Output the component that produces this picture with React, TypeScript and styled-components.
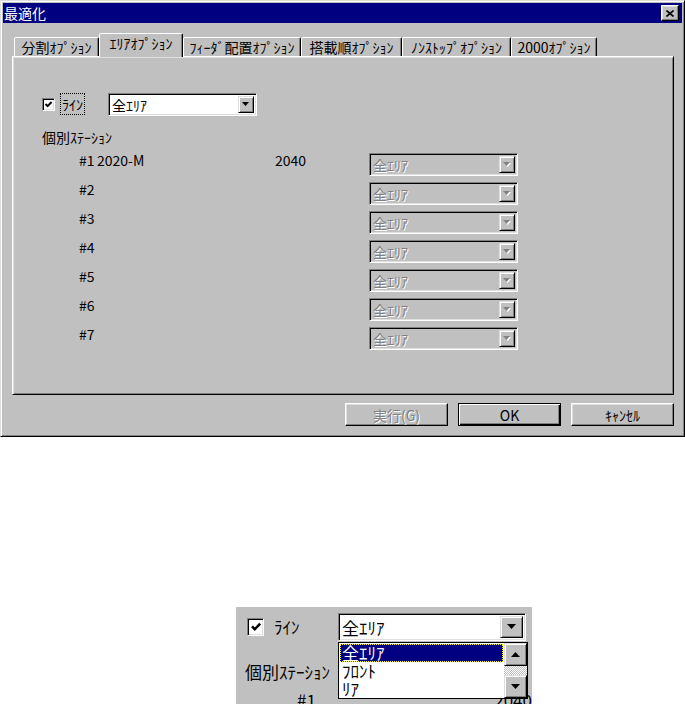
import styled, {createGlobalStyle} from "styled-components";

const GlobalStyle = createGlobalStyle`
  body {
    margin: 0;
    background: #fff;
    font-family: "Noto Sans CJK JP", "Noto Sans", sans-serif;
    font-size: 14px;
    color: #000;
  }
`;

const Page = styled.div`
  display: flex;
  flex-direction: column;
  width: 685px;
  height: 704px;
  overflow: hidden;
`;

const Dialog = styled.div`
  box-sizing: border-box;
  width: 685px;
  height: 437px;
  background: #c0c0c0;
  border: 1px solid;
  border-color: #dfdfdf #000 #000 #dfdfdf;
  box-shadow: inset 1px 1px #fff, inset -1px -1px #808080;
  padding: 2px;
  display: flex;
  flex-direction: column;
`;

const TitleBar = styled.div`
  height: 20px;
  background: #000080;
  color: #fff;
  display: flex;
  align-items: center;
  justify-content: space-between;
  padding: 0 3px 0 1px;
  line-height: 20px;
`;

const CloseButton = styled.div`
  box-sizing: border-box;
  width: 18px;
  height: 16px;
  background: #c0c0c0;
  border: 1px solid;
  border-color: #fff #000 #000 #fff;
  box-shadow: inset -1px -1px #808080, inset 1px 1px #dfdfdf;
  display: flex;
  align-items: center;
  justify-content: center;
`;

const Body = styled.div`
  display: flex;
  flex-direction: column;
  padding: 10px 8px 0 9px;
`;

const TabRow = styled.div`
  display: flex;
  align-items: flex-end;
  height: 23px;
  padding-left: 2px;
`;

const Tab = styled.div<{$active?: boolean; $w: number}>`
  position: relative;
  z-index: ${(p) => (p.$active ? 2 : 1)};
  box-sizing: border-box;
  width: ${(p) => p.$w}px;
  height: ${(p) => (p.$active ? 24 : 19)}px;
  margin-bottom: ${(p) => (p.$active ? -1 : 0)}px;
  background: #c0c0c0;
  border: 1px solid;
  border-bottom: 0;
  border-color: #fff #000 transparent #fff;
  border-radius: 2px 2px 0 0;
  box-shadow: inset -1px 0 #808080;
  text-align: center;
  line-height: 18px;
  white-space: nowrap;
`;

const Panel = styled.div`
  box-sizing: border-box;
  height: 339px;
  border: 1px solid;
  border-color: #fff #000 #000 #fff;
  box-shadow: inset 1px 1px #dfdfdf, inset -1px -1px #808080;
  padding: 36px 0 0 29px;
  display: flex;
  flex-direction: column;
`;

const CheckRow = styled.div<{$h: number}>`
  display: flex;
  align-items: center;
  height: ${(p) => p.$h}px;
`;

const CheckBox = styled.div<{$w: number; $h: number}>`
  box-sizing: border-box;
  width: ${(p) => p.$w}px;
  height: ${(p) => p.$h}px;
  background: #fff;
  border: 1px solid;
  border-color: #808080 #fff #fff #808080;
  box-shadow: inset 1px 1px #000, inset -1px -1px #dfdfdf;
  display: flex;
  align-items: center;
  justify-content: center;
`;

const CheckLabel = styled.span<{$w: number; $gap: number; $focus?: boolean}>`
  box-sizing: border-box;
  width: ${(p) => p.$w}px;
  margin-left: ${(p) => p.$gap}px;
  line-height: 1.1;
  white-space: nowrap;
  span {
    outline: ${(p) => (p.$focus ? "1px dotted #000" : "none")};
    padding: 0 1px;
  }
`;

const Combo = styled.div<{$w: number; $h: number; $disabled?: boolean}>`
  position: relative;
  box-sizing: border-box;
  width: ${(p) => p.$w}px;
  height: ${(p) => p.$h}px;
  background: ${(p) => (p.$disabled ? "#c0c0c0" : "#fff")};
  border: 1px solid;
  border-color: #808080 #fff #fff #808080;
  box-shadow: inset 1px 1px #000, inset -1px -1px #dfdfdf;
  padding: 2px;
  display: flex;
  align-items: stretch;
`;

const ComboText = styled.div<{$disabled?: boolean}>`
  flex: 1;
  display: flex;
  align-items: center;
  padding-left: 1px;
  white-space: nowrap;
  color: ${(p) => (p.$disabled ? "#808080" : "#000")};
  text-shadow: ${(p) => (p.$disabled ? "1px 1px 0 #fff" : "none")};
`;

const ArrowButton = styled.div<{$w: number}>`
  box-sizing: border-box;
  width: ${(p) => p.$w}px;
  background: #c0c0c0;
  border: 1px solid;
  border-color: #dfdfdf #000 #000 #dfdfdf;
  box-shadow: inset 1px 1px #fff, inset -1px -1px #808080;
  display: flex;
  align-items: center;
  justify-content: center;
`;

const SectionLabel = styled.div<{$mt: number; $lh: number}>`
  margin-top: ${(p) => p.$mt}px;
  line-height: ${(p) => p.$lh}px;
  white-space: nowrap;
`;

const StationList = styled.div`
  display: flex;
  flex-direction: column;
  margin-top: 9px;
`;

const StationRow = styled.div`
  display: grid;
  grid-template-columns: 18px 178px 94px 149px;
  height: 29px;
  padding-left: 37px;
  line-height: 14px;
  white-space: nowrap;
`;

const ButtonRow = styled.div`
  display: flex;
  justify-content: flex-end;
  gap: 10px;
  margin-top: 8px;
`;

const Button = styled.button<{$default?: boolean}>`
  box-sizing: border-box;
  width: 103px;
  height: 23px;
  padding: 0;
  font: inherit;
  font-size: 14px;
  background: #c0c0c0;
  color: #000;
  border: 1px solid;
  border-color: ${(p) => (p.$default ? "#000" : "#fff #000 #000 #fff")};
  box-shadow: ${(p) =>
    p.$default
      ? "inset 1px 1px #fff, inset -1px -1px #000, inset -2px -2px #808080"
      : "inset -1px -1px #808080, inset 1px 1px #dfdfdf"};
  &:disabled {
    color: #808080;
    text-shadow: 1px 1px 0 #fff;
  }
`;

const Zoomed = styled.div`
  position: relative;
  box-sizing: border-box;
  margin: 170px 0 0 236px;
  width: 296px;
  height: 97px;
  background: #c0c0c0;
  overflow: hidden;
  padding: 6px 0 0 11px;
  font-size: 17px;
`;

const DropList = styled.div`
  position: absolute;
  z-index: 5;
  top: calc(100% + 2px);
  left: -1px;
  box-sizing: border-box;
  width: 190px;
  height: 57px;
  background: #fff;
  border: 1px solid #000;
  display: flex;
`;

const Items = styled.div`
  flex: 1;
  padding: 1px;
  display: flex;
  flex-direction: column;
`;

const Item = styled.div<{$selected?: boolean}>`
  box-sizing: border-box;
  height: 18px;
  line-height: 16px;
  padding-left: 1px;
  white-space: nowrap;
  background: ${(p) => (p.$selected ? "#000080" : "transparent")};
  color: ${(p) => (p.$selected ? "#fff" : "#000")};
  border: 1px dotted ${(p) => (p.$selected ? "#ffff00" : "transparent")};
`;

const ScrollBar = styled.div`
  width: 23px;
  display: flex;
  flex-direction: column;
`;

const ScrollButton = styled(ArrowButton)`
  height: 23px;
`;

const ScrollTrack = styled.div`
  flex: 1;
  background-color: #fff;
  background-image: repeating-conic-gradient(#c0c0c0 0 25%, #fff 0 50%);
  background-size: 2px 2px;
`;

const ZoomRow = styled.div`
  display: flex;
  line-height: 20px;
  white-space: nowrap;
`;

const ZoomCell = styled.span<{$w: number}>`
  width: ${(p) => p.$w}px;
`;

function Arrow({up, disabled, size = 7}: {up?: boolean; disabled?: boolean; size?: number}) {
  const h = Math.ceil(size / 2);
  const points = up ? `0,${h} ${size / 2},0 ${size},${h}` : `0,0 ${size / 2},${h} ${size},0`;
  return (
    <svg width={size + 1} height={h + 1} viewBox={`0 0 ${size + 1} ${h + 1}`}>
      {disabled && <polygon points={points} fill="#fff" transform="translate(1,1)" />}
      <polygon points={points} fill={disabled ? "#808080" : "#000"} />
    </svg>
  );
}

function Check({size}: {size: number}) {
  return (
    <svg width={size} height={size} viewBox="0 0 9 9">
      <polyline points="1.5,4 3.6,6.2 7.6,2" fill="none" stroke="#000" strokeWidth="1.9" />
    </svg>
  );
}

const tabs = [
  {label: "分割ｵﾌﾟｼｮﾝ", w: 85},
  {label: "ｴﾘｱｵﾌﾟｼｮﾝ", w: 84, active: true},
  {label: "ﾌｨｰﾀﾞ配置ｵﾌﾟｼｮﾝ", w: 118},
  {label: "搭載順ｵﾌﾟｼｮﾝ", w: 101},
  {label: "ﾉﾝｽﾄｯﾌﾟｵﾌﾟｼｮﾝ", w: 109},
  {label: "2000ｵﾌﾟｼｮﾝ", w: 86},
];

const stations = [
  {no: "#1", name: "2020-M", code: "2040"},
  {no: "#2", name: "", code: ""},
  {no: "#3", name: "", code: ""},
  {no: "#4", name: "", code: ""},
  {no: "#5", name: "", code: ""},
  {no: "#6", name: "", code: ""},
  {no: "#7", name: "", code: ""},
];

export default function App() {
  return (
    <>
      <GlobalStyle />
      <Page>
        <Dialog>
          <TitleBar>
            <span>最適化</span>
            <CloseButton>
              <svg width="8" height="7" viewBox="0 0 8 7">
                <path d="M0.5 0.5 L7.5 6.5 M7.5 0.5 L0.5 6.5" stroke="#000" strokeWidth="1.6" />
              </svg>
            </CloseButton>
          </TitleBar>
          <Body>
            <TabRow>
              {tabs.map((t) => (
                <Tab key={t.label} $w={t.w} $active={t.active}>
                  {t.label}
                </Tab>
              ))}
            </TabRow>
            <Panel>
              <CheckRow $h={23}>
                <CheckBox $w={13} $h={13}>
                  <Check size={9} />
                </CheckBox>
                <CheckLabel $w={47} $gap={6} $focus>
                  <span>ﾗｲﾝ</span>
                </CheckLabel>
                <Combo $w={149} $h={23}>
                  <ComboText>全ｴﾘｱ</ComboText>
                  <ArrowButton $w={16}>
                    <Arrow />
                  </ArrowButton>
                </Combo>
              </CheckRow>
              <SectionLabel $mt={14} $lh={14}>
                個別ｽﾃｰｼｮﾝ
              </SectionLabel>
              <StationList>
                {stations.map((s) => (
                  <StationRow key={s.no}>
                    <span>{s.no}</span>
                    <span>{s.name}</span>
                    <span>{s.code}</span>
                    <Combo $w={149} $h={23} $disabled>
                      <ComboText $disabled>全ｴﾘｱ</ComboText>
                      <ArrowButton $w={16}>
                        <Arrow disabled />
                      </ArrowButton>
                    </Combo>
                  </StationRow>
                ))}
              </StationList>
            </Panel>
            <ButtonRow>
              <Button disabled>実行(G)</Button>
              <Button $default>OK</Button>
              <Button>ｷｬﾝｾﾙ</Button>
            </ButtonRow>
          </Body>
        </Dialog>

        <Zoomed>
          <CheckRow $h={28}>
            <CheckBox $w={17} $h={18}>
              <Check size={12} />
            </CheckBox>
            <CheckLabel $w={65} $gap={9}>
              <span>ﾗｲﾝ</span>
            </CheckLabel>
            <Combo $w={188} $h={28}>
              <ComboText>全ｴﾘｱ</ComboText>
              <ArrowButton $w={23}>
                <Arrow size={9} />
              </ArrowButton>
              <DropList>
                <Items>
                  <Item $selected>全ｴﾘｱ</Item>
                  <Item>ﾌﾛﾝﾄ</Item>
                  <Item>ﾘｱ</Item>
                </Items>
                <ScrollBar>
                  <ScrollButton $w={23}>
                    <Arrow up size={9} />
                  </ScrollButton>
                  <ScrollTrack />
                  <ScrollButton $w={23}>
                    <Arrow size={9} />
                  </ScrollButton>
                </ScrollBar>
              </DropList>
            </Combo>
          </CheckRow>
          <SectionLabel $mt={21} $lh={20} style={{marginLeft: -2}}>
            個別ｽﾃｰｼｮﾝ
          </SectionLabel>
          <ZoomRow style={{marginTop: 8}}>
            <ZoomCell $w={55} />
            <ZoomCell $w={217}>#1</ZoomCell>
            <ZoomCell $w={40}>2040</ZoomCell>
          </ZoomRow>
        </Zoomed>
      </Page>
    </>
  );
}
